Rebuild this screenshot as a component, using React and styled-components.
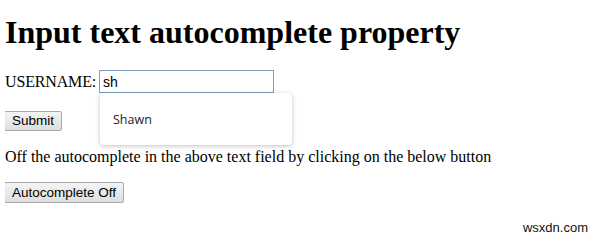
import styled, { createGlobalStyle } from 'styled-components';

const Global = createGlobalStyle`
  html, body {
    margin: 0;
    background: #ffffff;
  }
  body {
    padding: 0 5px;
    font-family: "Liberation Serif", "Times New Roman", serif;
    font-size: 16px;
    color: #000;
  }
`;

const Page = styled.div`
  position: relative;
  width: 590px;
  height: 240px;
  overflow: hidden;
`;

const Title = styled.h1`
  margin: 0;
  padding-top: 14px;
  font-size: 32px;
  font-weight: bold;
  line-height: 37px;
`;

const Form = styled.form`
  margin: 19px 0 0;
`;

const Row = styled.div`
  position: relative;
  display: flex;
  align-items: center;
  gap: 3px;
  height: 23px;
  letter-spacing: -0.15px;
`;

const Field = styled.input`
  box-sizing: border-box;
  width: 175px;
  height: 23px;
  padding: 1px 3px;
  border: 1px solid #7f9dc4;
  outline: none;
  font-family: "Liberation Sans", Arial, sans-serif;
  font-size: 14px;
  letter-spacing: 0;
  color: #000;
`;

const Suggest = styled.div`
  position: absolute;
  left: 95px;
  top: 23px;
  box-sizing: border-box;
  width: 192px;
  height: 52px;
  padding-left: 13px;
  display: flex;
  align-items: center;
  background: #fff;
  border-radius: 4px;
  box-shadow: 0 1px 4px rgba(0, 0, 0, 0.25);
  font-family: "Open Sans", "Noto Sans", sans-serif;
  font-size: 12.5px;
  letter-spacing: 0;
  color: #222;
`;

const Button = styled.button`
  box-sizing: border-box;
  height: ${(p) => p.$h}px;
  padding: 0 7px;
  margin-left: -1px;
  border: 1px solid #a9a9a9;
  border-radius: 2px;
  background: linear-gradient(#f4f4f4, #dedede);
  font-family: "Liberation Sans", Arial, sans-serif;
  font-size: 13.5px;
  color: #000;
  line-height: 18px;
`;

const Spaced = styled.div`
  margin-top: ${(p) => p.$top}px;
`;

const Text = styled.p`
  margin: 16px 0 0;
  line-height: 19px;
`;

const Mark = styled.div`
  position: absolute;
  right: 7px;
  bottom: 5px;
  font-family: "Liberation Sans", Arial, sans-serif;
  font-size: 13px;
  color: #111;
`;

export default function App() {
  return (
    <Page>
      <Global />
      <Title>Input text autocomplete property</Title>
      <Form onSubmit={(e) => e.preventDefault()}>
        <Row>
          USERNAME:
          <Field defaultValue="sh" />
          <Suggest>Shawn</Suggest>
        </Row>
        <Spaced $top={18}>
          <Button type="submit" $h={20}>Submit</Button>
        </Spaced>
      </Form>
      <Text>Off the autocomplete in the above text field by clicking on the below button</Text>
      <Spaced $top={16}>
        <Button type="button" $h={21}>Autocomplete Off</Button>
      </Spaced>
      <Mark>wsxdn.com</Mark>
    </Page>
  );
}
